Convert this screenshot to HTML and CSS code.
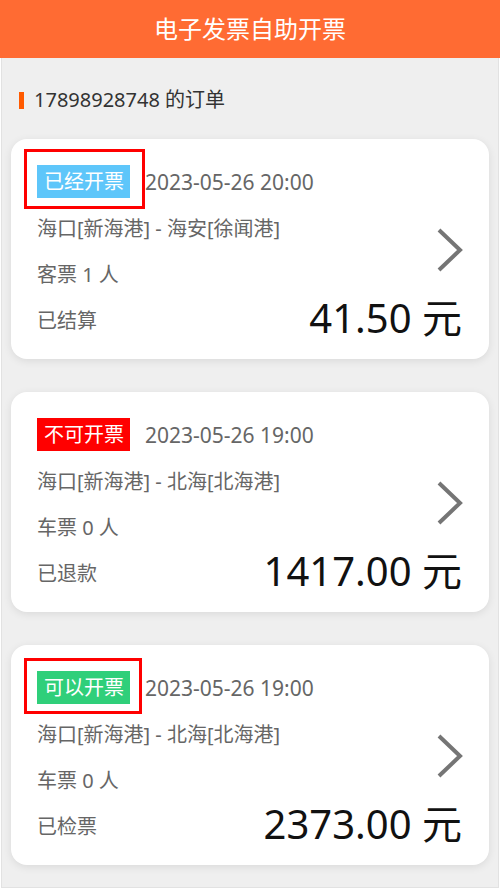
FILE: index.html
```html
<!DOCTYPE html>
<html lang="zh-CN">
<head>
<meta charset="utf-8">
<title>电子发票自助开票</title>
<link rel="stylesheet" href="styles.css">
</head>
<body>
<header class="topbar">电子发票自助开票</header>
<main class="content">
  <h2 class="section-title">17898928748 的订单</h2>
  <ul class="orders">
    <li class="card">
      <div class="card-head">
        <span class="badge badge-done marked">已经开票</span>
        <span class="date">2023-05-26 20:00</span>
      </div>
      <div class="line route">海口[新海港] - 海安[徐闻港]</div>
      <svg class="chevron" width="26" height="44" viewBox="0 0 26 44" aria-hidden="true"><polyline points="2,2 23,22 2,42" fill="none" stroke="#757575" stroke-width="4"/></svg>
      <div class="line count">客票 1 人</div>
      <div class="line status">已结算</div>
      <div class="price">41.50 元</div>
    </li>
    <li class="card">
      <div class="card-head">
        <span class="badge badge-no">不可开票</span>
        <span class="date">2023-05-26 19:00</span>
      </div>
      <div class="line route">海口[新海港] - 北海[北海港]</div>
      <svg class="chevron" width="26" height="44" viewBox="0 0 26 44" aria-hidden="true"><polyline points="2,2 23,22 2,42" fill="none" stroke="#757575" stroke-width="4"/></svg>
      <div class="line count">车票 0 人</div>
      <div class="line status">已退款</div>
      <div class="price">1417.00 元</div>
    </li>
    <li class="card">
      <div class="card-head">
        <span class="badge badge-ok marked marked-tight">可以开票</span>
        <span class="date">2023-05-26 19:00</span>
      </div>
      <div class="line route">海口[新海港] - 北海[北海港]</div>
      <svg class="chevron" width="26" height="44" viewBox="0 0 26 44" aria-hidden="true"><polyline points="2,2 23,22 2,42" fill="none" stroke="#757575" stroke-width="4"/></svg>
      <div class="line count">车票 0 人</div>
      <div class="line status">已检票</div>
      <div class="price">2373.00 元</div>
    </li>
  </ul>
</main>
</body>
</html>
```
FILE: styles.css
```css
* { box-sizing: border-box; }
html, body { margin: 0; padding: 0; }
body {
  height: 889px;
  display: flex;
  flex-direction: column;
  background: #ffffff;
  font-family: "Noto Sans", "Noto Sans CJK SC", sans-serif;
  overflow: hidden;
}
.topbar {
  flex: 0 0 58px;
  height: 58px;
  background: #ff6b33;
  color: #ffffff;
  font-size: 24px;
  line-height: 58px;
  text-align: center;
}
.content {
  flex: 1;
  margin: 0 1px 1px;
  border: 1px solid #e2e2e2;
  border-top: none;
  background: #efefef;
  padding: 0 9px;
}
.section-title {
  margin: 30px 0 27px 8px;
  display: flex;
  align-items: center;
  gap: 10px;
  font-size: 20px;
  line-height: 24px;
  font-weight: normal;
  color: #333333;
}
.section-title::before {
  content: "";
  width: 5px;
  height: 17px;
  background: #ff5a00;
}
.orders {
  list-style: none;
  margin: 0;
  padding: 0;
  display: flex;
  flex-direction: column;
  gap: 33px;
}
.card {
  background: #ffffff;
  border-radius: 16px;
  box-shadow: 0 2px 8px rgba(0, 0, 0, 0.09);
  padding: 26px 27px 23px 26px;
  height: 220px;
  display: grid;
  grid-template-columns: minmax(0, 1fr) auto;
  grid-template-rows: 33px 30px 30px 30px;
  row-gap: 16px;
  column-gap: 10px;
}
.card-head {
  grid-column: 1 / 3;
  grid-row: 1;
  display: flex;
  align-items: center;
  gap: 15px;
}
.badge {
  position: relative;
  height: 33px;
  line-height: 33px;
  padding: 0 6px 0 7px;
  font-size: 20px;
  color: #ffffff;
}
.badge-done { background: #5ec6fa; }
.badge-no { background: #ff0000; }
.badge-ok { background: #2fcf7a; }
.marked::after {
  content: "";
  position: absolute;
  top: -16px;
  left: -13px;
  right: -15px;
  bottom: -11px;
  border: 3px solid #ff0000;
}
.marked-tight::after {
  top: -13px;
  right: -12px;
  bottom: -10px;
}
.date {
  font-size: 21px;
  color: #666666;
}
.line {
  grid-column: 1;
  font-size: 20px;
  line-height: 30px;
  color: #666666;
  white-space: nowrap;
}
.route { grid-row: 2; }
.count { grid-row: 3; }
.status { grid-row: 4; }
.chevron {
  grid-column: 2;
  grid-row: 2 / 4;
  justify-self: end;
  align-self: center;
  margin-bottom: 5px;
  margin-right: -1px;
}
.price {
  grid-column: 2;
  grid-row: 4;
  justify-self: end;
  align-self: center;
  margin-bottom: 6px;
  font-size: 40px;
  line-height: 30px;
  color: #111111;
  white-space: nowrap;
}
```
